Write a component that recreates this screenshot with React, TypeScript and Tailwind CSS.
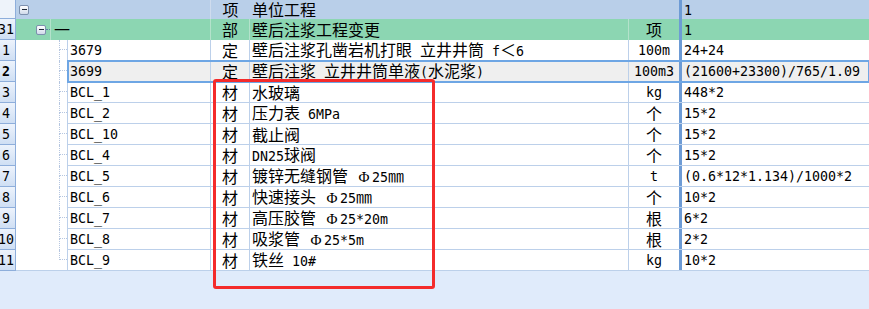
import React from "react";

type Row = {
    n: string;
    code: string;
    kind: string;
    name: string;
    unit: string;
    qty: string;
    sel?: boolean;
};

const rows: Row[] = [
    { n: "1", code: "3679", kind: "定", name: "壁后注浆孔凿岩机打眼 立井井筒 f＜6", unit: "100m", qty: "24+24" },
    { n: "2", code: "3699", kind: "定", name: "壁后注浆 立井井筒单液(水泥浆)", unit: "100m3", qty: "(21600+23300)/765/1.09", sel: true },
    { n: "3", code: "BCL_1", kind: "材", name: "水玻璃", unit: "kg", qty: "448*2" },
    { n: "4", code: "BCL_2", kind: "材", name: "压力表 6MPa", unit: "个", qty: "15*2" },
    { n: "5", code: "BCL_10", kind: "材", name: "截止阀", unit: "个", qty: "15*2" },
    { n: "6", code: "BCL_4", kind: "材", name: "DN25球阀", unit: "个", qty: "15*2" },
    { n: "7", code: "BCL_5", kind: "材", name: "镀锌无缝钢管 Φ25㎜", unit: "t", qty: "(0.6*12*1.134)/1000*2" },
    { n: "8", code: "BCL_6", kind: "材", name: "快速接头 Φ25㎜", unit: "个", qty: "10*2" },
    { n: "9", code: "BCL_7", kind: "材", name: "高压胶管 Φ25*20m", unit: "根", qty: "6*2" },
    { n: "10", code: "BCL_8", kind: "材", name: "吸浆管 Φ25*5m", unit: "根", qty: "2*2" },
    { n: "11", code: "BCL_9", kind: "材", name: "铁丝 10#", unit: "kg", qty: "10*2" },
];

// SimSun-like: full-width CJK at 16px, half-width latin at 8px
function Txt({ s }: { s: string }) {
    const parts: { k: "w" | "n" | "phi"; t: string }[] = [];
    for (const ch of s) {
        const k = ch === "Φ" ? "phi" : /[\u2E80-\u9FFF\uFF00-\uFFEF\u3000-\u33FF]/.test(ch) ? "w" : "n";
        const last = parts[parts.length - 1];
        if (last && last.k === k && k !== "phi") last.t += ch;
        else parts.push({ k, t: ch });
    }
    return (
        <span className="whitespace-pre leading-[16px]">
            {parts.map((p, i) =>
                p.k === "w" ? (
                    <span key={i} className="font-['Noto_Sans_CJK_SC',sans-serif] text-[16px] leading-[16px]">{p.t}</span>
                ) : p.k === "phi" ? (
                    <span key={i} className="inline-block w-[16px] text-center font-['Liberation_Serif',serif] text-[15px] leading-[16px]">{p.t}</span>
                ) : (
                    <span key={i} className="font-['DejaVu_Sans_Mono',monospace] text-[13.3px] leading-[16px]">{p.t}</span>
                )
            )}
        </span>
    );
}

function Expander() {
    return (
        <div className="w-[10px] h-[10px] border border-[#7d90ae] rounded-[2px] bg-gradient-to-b from-white to-[#d0daea] flex items-center justify-center">
            <div className="w-[5px] h-px bg-[#1f2937]" />
        </div>
    );
}

function RowHead({ n, bold }: { n?: string; bold?: boolean }) {
    return (
        <div className="w-[16px] shrink-0 h-full overflow-hidden flex items-center border-r border-b border-[#8eaedb] bg-gradient-to-b from-[#edf3fc] to-[#cfdff4]">
            <div className={`w-[12px] shrink-0 flex justify-center ${bold ? "font-bold" : ""}`}>
                {n && <Txt s={n} />}
            </div>
        </div>
    );
}

export default function App() {
    return (
        <div className="relative w-[869px] h-[309px] overflow-hidden bg-[#e0ebfb] text-black">
            {/* header row */}
            <div className="flex h-[19px]">
                <div className="w-[16px] shrink-0 bg-[#eef3fa] border-r border-b border-[#8eaedb]" />
                <div className="flex flex-1 bg-[#b9cfe9]">
                    <div className="w-[52px] shrink-0 flex items-center pl-[3px]">
                        <Expander />
                    </div>
                    <div className="w-[143px] shrink-0 border-r border-[#cfdcee]" />
                    <div className="w-[39px] shrink-0 flex items-center justify-center"><Txt s="项" /></div>
                    <div className="w-[379px] shrink-0 flex items-center pl-[2px]"><Txt s="单位工程" /></div>
                    <div className="w-[50px] shrink-0" />
                    <div className="w-[3px] shrink-0 bg-[#6d9bd5]" />
                    <div className="flex-1 flex items-center pl-[2px]"><Txt s="1" /></div>
                </div>
            </div>

            {/* group row */}
            <div className="flex h-[21px]">
                <RowHead n="31" />
                <div className="flex flex-1 bg-[#8cd6b2]">
                    <div className="w-[34px] shrink-0 flex items-center pl-[20px]">
                        <Expander />
                        <div className="w-[4px] border-t border-dotted border-[#5f7f9f]" />
                    </div>
                    <div className="w-[161px] shrink-0 flex items-center pl-[3px] border-l border-r border-[#b4e2cb]"><Txt s="一" /></div>
                    <div className="w-[39px] shrink-0 flex items-center justify-center border-r border-[#b4e2cb]"><Txt s="部" /></div>
                    <div className="w-[379px] shrink-0 flex items-center pl-[2px] border-r border-[#b4e2cb]"><Txt s="壁后注浆工程变更" /></div>
                    <div className="w-[50px] shrink-0 flex items-center justify-center"><Txt s="项" /></div>
                    <div className="w-[3px] shrink-0 bg-[#6d9bd5]" />
                    <div className="flex-1 flex items-center pl-[2px]"><Txt s="1" /></div>
                </div>
            </div>

            {rows.map((r, i) => {
                const last = i === rows.length - 1;
                return (
                    <div key={r.n} className="flex h-[21px]">
                        <RowHead n={r.n} bold={r.sel} />
                        <div className={`w-[52px] shrink-0 flex bg-white border-r border-[#bcd0ea] ${last ? "border-b" : ""}`}>
                            <div className="w-[43px] shrink-0" />
                            <div className="w-[8px] flex flex-col">
                                <div className="h-[10px] border-l border-b border-dotted border-[#b5c6e0]" />
                                <div className={`flex-1 ${last ? "" : "border-l border-dotted border-[#b5c6e0]"}`} />
                            </div>
                        </div>
                        <div className={`flex flex-1 border-b border-[#bcd0ea] ${r.sel ? "bg-[#efefef] outline-2 outline-[#6ea6e4] -outline-offset-1 relative z-10" : "bg-white"}`}>
                            <div className="w-[143px] shrink-0 flex items-center pl-[2px] border-r border-[#bcd0ea]"><Txt s={r.code} /></div>
                            <div className="w-[39px] shrink-0 flex items-center justify-center border-r border-[#bcd0ea]"><Txt s={r.kind} /></div>
                            <div className="w-[379px] shrink-0 flex items-center pl-[2px] border-r border-[#bcd0ea]"><Txt s={r.name} /></div>
                            <div className="w-[50px] shrink-0 flex items-center justify-center"><Txt s={r.unit} /></div>
                            <div className="w-[3px] shrink-0 bg-[#6d9bd5]" />
                            <div className="flex-1 flex items-center pl-[2px]"><Txt s={r.qty} /></div>
                        </div>
                    </div>
                );
            })}

            {/* red annotation box */}
            <div className="absolute left-[213px] top-[79px] w-[222px] h-[210px] border-[3px] border-[#f42b2b] rounded-[3px] z-20 pointer-events-none" />
        </div>
    );
}
